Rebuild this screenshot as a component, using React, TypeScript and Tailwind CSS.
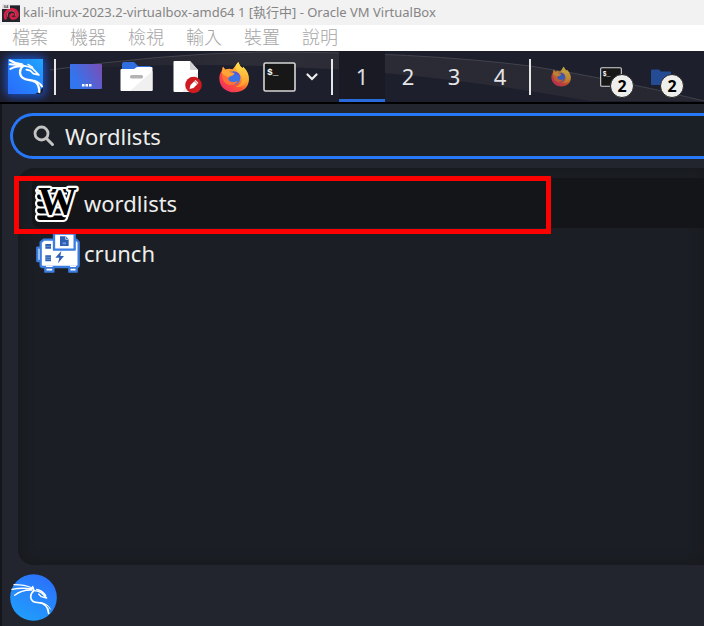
import type { ReactNode } from "react";

const menus = ["檔案", "機器", "檢視", "輸入", "裝置", "說明"];
const workspaces = ["1", "2", "3", "4"];

function VirtualBoxIcon() {
  return (
    <svg viewBox="0 0 54 54" className="h-[18px] w-[18px] shrink-0" aria-hidden="true">
      <rect y="4" width="54" height="50" fill="#25232b" />
      <path d="M12 46C4 30 14 14 32 16c14 2 17 14 13 22-5 8-17 7-19-1-1-6 6-8 10-4" fill="none" stroke="#d51f46" strokeWidth="8" />
      <path d="M16 38C14 25 22 19 33 21c9 3 10 12 5 16" fill="none" stroke="#ef5470" strokeWidth="3" />
      <rect width="24" height="15" fill="#e4e4e4" />
      <text x="5" y="12" fontSize="12" fontWeight="700" fontFamily="Liberation Sans, sans-serif" fill="#444">64</text>
    </svg>
  );
}

function KaliIcon() {
  return (
    <svg viewBox="0 0 105 105" className="h-[35px] w-[35px]" aria-hidden="true">
      <defs>
        <linearGradient id="kali" x1="0" y1="1" x2="1" y2="0">
          <stop offset="0" stopColor="#2a6cfb" />
          <stop offset="0.5" stopColor="#2583fd" />
          <stop offset="1" stopColor="#1fa5ff" />
        </linearGradient>
      </defs>
      <path d="M0 0h105v78q-4 20-24 27H0z" fill="url(#kali)" />
      <g fill="none" stroke="#fff" strokeWidth="7" strokeLinecap="round" strokeLinejoin="round">
        <path d="M6 4q14 9 36 12M5 16q20 0 42 5M7 30q12-9 38-8" strokeWidth="6" />
        <path d="M46 20C38 27 34 38 38 49c6 17 28 10 43 19 10 7 13 19 13 31" />
        <path d="M78 65q16 5 24 17" strokeWidth="6" />
        <path d="M46 20q18 2 28 9l19 19-17-4-9-9-12-3" strokeWidth="5" />
        <path d="M60 16l14 9" strokeWidth="4" />
      </g>
    </svg>
  );
}

function DesktopIcon() {
  return (
    <svg viewBox="0 0 32 26" className="h-[26px] w-8" aria-hidden="true">
      <defs>
        <linearGradient id="desktop" x1="0" y1="0.6" x2="1" y2="0.2">
          <stop offset="0.1" stopColor="#3176ef" />
          <stop offset="1" stopColor="#7650b9" />
        </linearGradient>
      </defs>
      <rect width="32" height="25" rx="1" fill="url(#desktop)" />
      <path d="M12 20h2.500v2.500H12zM15.500 20H18v2.500h-2.500zM19 20h2.500v2.500H19z" fill="#fff" />
    </svg>
  );
}

function FilesIcon() {
  return (
    <svg viewBox="0 0 33 31" className="h-[31px] w-[33px]" aria-hidden="true">
      <path d="M2 11V3q0-2 2-2h10l4 4h12q1 0 1 1v5z" fill="#2f6de0" />
      <path d="M.5 9q0-1 1-1H14l3-2h14.500q1 0 1 1v22q0 1-1 1h-30q-1 0-1-1z" fill="#fff" />
      <path d="M32.500 10v19q0 1-1 1H10z" fill="#f0f0f0" />
      <rect x="10" y="14" width="13" height="3.500" rx="1.500" fill="#b4b4b4" />
    </svg>
  );
}

function EditorIcon() {
  return (
    <svg viewBox="0 0 31 34" className="h-[34px] w-[31px]" aria-hidden="true">
      <path d="M3.500 1H19l8 9v22H3.500q-1 0-1-1V2q0-1 1-1z" fill="#fff" />
      <path d="M19 1v8q0 1 1 1h7z" fill="#d2d2d2" />
      <path d="M27 12v20H11z" fill="#eee" />
      <circle cx="22.500" cy="25" r="8.300" fill="#cf1b20" />
      <path d="M18.500 29l1-4 5-5 3 3-5 5z" fill="#fff" />
      <path d="M23.500 21l3 3" stroke="#cf1b20" strokeWidth="0.800" />
    </svg>
  );
}

function FirefoxIcon({ className }: { className: string }) {
  return (
    <svg viewBox="0 0 90 96" className={className} aria-hidden="true">
      <defs>
        <linearGradient id="fox" x1="0.85" y1="0.1" x2="0.2" y2="0.9">
          <stop offset="0" stopColor="#ffe04a" />
          <stop offset="0.35" stopColor="#ffa32f" />
          <stop offset="0.65" stopColor="#ff5634" />
          <stop offset="1" stopColor="#f0325e" />
        </linearGradient>
        <linearGradient id="flame" x1="0.5" y1="0" x2="0.5" y2="1">
          <stop offset="0" stopColor="#ffe14d" />
          <stop offset="1" stopColor="#ff982b" />
        </linearGradient>
      </defs>
      <path d="M8 30l4-13 7 9q5-3 12-3l10 2L58 3q4 12 12 18l3-4q17 17 17 37c0 24-18 40-44 40S1 76 1 53c0-9 2-16 7-23z" fill="url(#fox)" />
      <circle cx="44" cy="51" r="20" fill="#3a74e8" />
      <path d="M44 32q20 0 20 20-3-10-13-12z" fill="#6650d8" />
      <path d="M12 17q9 16 24 16l10 4q-1 6-12 9-5 3-6 8 2 9 13 9 9 0 16-4-8 15-24 13Q11 69 9 43z" fill="#ff7139" />
      <path d="M12 17l7 9q7-4 16-1-5 4-3 9l14 3q-2 6-12 9l-8 2q-12-5-18-13z" fill="#ffa436" />
      <path d="M58 3q-12 11-6 25c6 9 17 12 17 27 0 12-8 20-19 23 20 2 34-11 34-28 0-13-6-21-14-28Q61 15 58 3z" fill="url(#flame)" />
    </svg>
  );
}

function TerminalIcon({ className }: { className: string }) {
  return (
    <svg viewBox="0 0 33 30" className={className} aria-hidden="true">
      <rect x="1" y="1" width="31" height="28" rx="1.500" fill="#171717" stroke="#d6d6d6" strokeWidth="1.600" />
      <text x="4" y="13" fontSize="9.500" fontWeight="700" fontFamily="Liberation Mono, monospace" fill="#fff">$_</text>
    </svg>
  );
}

function WordlistsIcon() {
  return (
    <svg viewBox="0 0 46 38" className="h-[38px] w-[46px] shrink-0 overflow-visible" aria-hidden="true">
      <path
        d="M6 4h30l-3 30q-1 3-4 3H6q-4 0-4-4 0-2 2-3-2-1-2-3.500T4 23q-2-1-2-3.500T4 16q-2-1-2-3.500T4 9Q2 8 2 6.500T6 4z"
        fill="#000"
        stroke="#fff"
        strokeWidth="2.200"
      />
      <path d="M4 9.500h29M4 16.500h28M4 23.500h28M4 30.500h27" stroke="#fff" strokeWidth="2" />
      <text x="4" y="30" fontSize="39" fontWeight="700" fontFamily="Liberation Serif, serif" fill="#000" stroke="#fff" strokeWidth="4.500" strokeLinejoin="round" paintOrder="stroke">W</text>
    </svg>
  );
}

function CrunchIcon() {
  return (
    <svg viewBox="0 0 132 120" className="h-10 w-11 shrink-0" aria-hidden="true">
      <g fill="#fff" stroke="#3b7de0" strokeWidth="7" strokeLinejoin="round">
        <path d="M28 94h24v22H28zM100 94h22v22h-22z" />
        <path d="M4 44h12v40H4z" />
        <path d="M14 28l9-8h98l7 8v68q0 6-6 6H20q-6 0-6-6z" />
        <path d="M54 2h62v48H54z" />
      </g>
      <path d="M28 33h17v14H28zM28 67h17v18H28z" fill="#2c5fb5" />
      <path d="M28 40h17M28 73h17M28 79h17" stroke="#8badde" strokeWidth="2" />
      <path d="M30 100h20M102 100h18" stroke="#fff" strokeWidth="4" />
      <path d="M30 106h20M102 106h18" stroke="#2c5fb5" strokeWidth="2" />
      <path d="M72 10h17l9 9v20H72z" fill="#2c5fb5" />
      <path d="M89 10v9h9" stroke="#fff" strokeWidth="2" fill="none" />
      <path d="M80 28h10v6H80z" fill="#6f97d8" />
      <path d="M76 54L58 74h12l-4 17 18-22H73z" fill="#2c5fb5" />
    </svg>
  );
}

function Avatar() {
  return (
    <svg viewBox="0 0 141 141" className="h-[47px] w-[47px]" aria-hidden="true">
      <defs>
        <linearGradient id="avatar" x1="0.2" y1="1" x2="0.7" y2="0.1">
          <stop offset="0" stopColor="#20a0fc" />
          <stop offset="1" stopColor="#2a74fb" />
        </linearGradient>
      </defs>
      <circle cx="70.500" cy="70.500" r="70" fill="url(#avatar)" />
      <g fill="none" stroke="#fff" strokeLinecap="round" strokeLinejoin="round">
        <path d="M12 32q32 0 55 10M6 46q30-6 60-1M14 64q20-17 52-16" strokeWidth="4" />
        <path d="M68 38l4 12q-10 8-10 19c1 14 11 16 24 17 17 0 29 13 30 32" strokeWidth="5" />
        <path d="M94 87q20 2 27 18" strokeWidth="3" />
        <path d="M70 50q16-1 26 8l14 14-16-4-8-8M80 46q17 3 27 18" strokeWidth="4" />
      </g>
    </svg>
  );
}

function Separator() {
  return <span className="h-9 w-0.5 shrink-0 bg-[#e6e6e8]" />;
}

function WindowButton({ label, count, children }: { label: string; count?: number; children: ReactNode }) {
  return (
    <button type="button" aria-label={label} className="relative flex h-full w-[50px] shrink-0 items-center justify-center">
      {children}
      {count && (
        <span className="absolute bottom-1 left-6 flex h-6 w-6 items-center justify-center rounded-full border border-[#222] bg-[#eeeeec] text-base font-bold text-black">
          {count}
        </span>
      )}
    </button>
  );
}

function Taskbar() {
  return (
    <nav className="relative flex h-[53px] shrink-0 items-center overflow-hidden border-b-2 border-black bg-[#1e1f2c]">
      <svg viewBox="0 0 704 51" preserveAspectRatio="none" className="absolute inset-0 h-full w-full" aria-hidden="true">
        <defs>
          <linearGradient id="swoosh" x1="0" x2="1">
            <stop offset="0" stopColor="#30313a" stopOpacity="0" />
            <stop offset="0.3" stopColor="#2c2d36" />
            <stop offset="1" stopColor="#262730" />
          </linearGradient>
        </defs>
        <path d="M50 19Q160 3 260 1q160 0 270 14 90 14 174 35H590Q430 22 310 17 180 10 50 19z" fill="url(#swoosh)" />
        <path d="M50 19Q160 3 260 1q160 0 270 14 90 14 174 35" fill="none" stroke="#41424b" strokeWidth="1" />
      </svg>
      <button type="button" aria-label="Kali" className="relative flex h-full w-[50px] shrink-0 items-center justify-center">
        <span className="rounded shadow-[0_0_8px_3px_#1c4dbb]">
          <KaliIcon />
        </span>
      </button>
      <div className="relative flex h-full flex-1 items-center pl-1">
        <Separator />
        <div className="flex h-full shrink-0 items-center pr-2 pl-[5px]">
          <button type="button" aria-label="Desktop" className="flex w-[50px] justify-center"><DesktopIcon /></button>
          <button type="button" aria-label="Files" className="flex w-[50px] justify-center"><FilesIcon /></button>
          <button type="button" aria-label="Text editor" className="flex w-[50px] justify-center"><EditorIcon /></button>
          <button type="button" aria-label="Firefox" className="flex w-[46px] justify-center"><FirefoxIcon className="h-8 w-[30px]" /></button>
          <button type="button" aria-label="Terminal" className="flex w-11 justify-center"><TerminalIcon className="h-[30px] w-[33px]" /></button>
          <button type="button" aria-label="More terminals" className="flex w-[22px] justify-center">
            <svg viewBox="0 0 12 8" className="h-2 w-3" aria-hidden="true">
              <path d="M1.500 1.500L6 6l4.500-4.500" fill="none" stroke="#eee" strokeWidth="2.200" strokeLinecap="round" />
            </svg>
          </button>
        </div>
        <Separator />
        <div className="flex h-full shrink-0 px-1.5">
          {workspaces.map((name, index) => (
            <button
              key={name}
              type="button"
              className={
                index === 0
                  ? "w-[46px] border-b-[3px] border-[#2a6bdc] bg-[#191a24] pt-[3px] text-[22px] text-[#dcdce0]"
                  : "w-[46px] text-[22px] text-[#e4e4e8]"
              }
            >
              {name}
            </button>
          ))}
        </div>
        <Separator />
        <div className="flex h-full shrink-0 pl-[5px]">
          <WindowButton label="Firefox"><FirefoxIcon className="h-[21px] w-5 opacity-70" /></WindowButton>
          <WindowButton label="Terminal windows" count={2}><TerminalIcon className="h-5 w-[22px]" /></WindowButton>
          <WindowButton label="File windows" count={2}>
            <svg viewBox="0 0 20 16" className="h-4 w-5" aria-hidden="true">
              <path d="M0 1.500Q0 .5 1 .5h7l2 2h9q1 0 1 1V15q0 1-1 1H1q-1 0-1-1z" fill="#244c94" />
            </svg>
          </WindowButton>
        </div>
      </div>
    </nav>
  );
}

export default function App() {
  return (
    <div className="flex min-h-screen flex-col overflow-hidden bg-[#22252e] font-['Noto_Sans','Noto_Sans_CJK_TC',sans-serif]">
      <header className="flex h-[25px] shrink-0 items-center gap-[3px] bg-[#f2f2f2] pl-0.5 text-[13px] whitespace-nowrap text-[#858585]">
        <VirtualBoxIcon />
        <h1>kali-linux-2023.2-virtualbox-amd64 1 [執行中] - Oracle VM VirtualBox</h1>
      </header>
      <div className="flex h-[26px] shrink-0 items-center gap-[22px] bg-white pb-1 pl-3 font-['Noto_Sans_CJK_TC',sans-serif] text-lg leading-6 font-light text-[#a6a6a6]">
        {menus.map((menu) => (
          <button key={menu} type="button">{menu}</button>
        ))}
      </div>
      <Taskbar />

      <main className="flex flex-1 flex-col border-l-2 border-[#15161c] pt-[9px]">
        <label className="ml-2 flex h-[46px] items-center gap-2.5 rounded-l-full border-[3px] border-r-0 border-[#2777f7] bg-[#1b1f26] pl-5">
          <svg viewBox="0 0 22 22" className="h-[22px] w-[22px] shrink-0" aria-hidden="true">
            <circle cx="8.500" cy="8.500" r="6.500" fill="none" stroke="#c4c4c4" strokeWidth="2.800" />
            <path d="M13.500 13.500l6 6" stroke="#c4c4c4" strokeWidth="3" strokeLinecap="round" />
          </svg>
          <input type="text" aria-label="Search" defaultValue="Wordlists" className="min-w-0 flex-1 bg-transparent text-[22px] text-[#eeeeec] outline-none" />
        </label>

        <ul className="mt-[9px] ml-4 flex-1 rounded-l-2xl bg-[#1b1e24] pt-2.5 pl-3.5 text-[22px] text-[#eeeeec] shadow-[inset_0_0_14px_#17181b]">
          <li className="relative">
            <button type="button" className="flex h-[50px] w-full items-center gap-1 rounded-l-lg bg-[#141518] pl-0.5">
              <WordlistsIcon />
              wordlists
            </button>
            <span className="pointer-events-none absolute -top-0.5 -left-[18px] z-10 h-[58px] w-[537px] border-[5px] border-[#fe0000]" />
          </li>
          <li>
            <button type="button" className="flex h-[50px] w-full items-center gap-1 pl-1">
              <CrunchIcon />
              crunch
            </button>
          </li>
        </ul>

        <footer className="flex h-[61px] shrink-0 items-center pt-1 pl-2">
          <button type="button" aria-label="User"><Avatar /></button>
        </footer>
      </main>
    </div>
  );
}
